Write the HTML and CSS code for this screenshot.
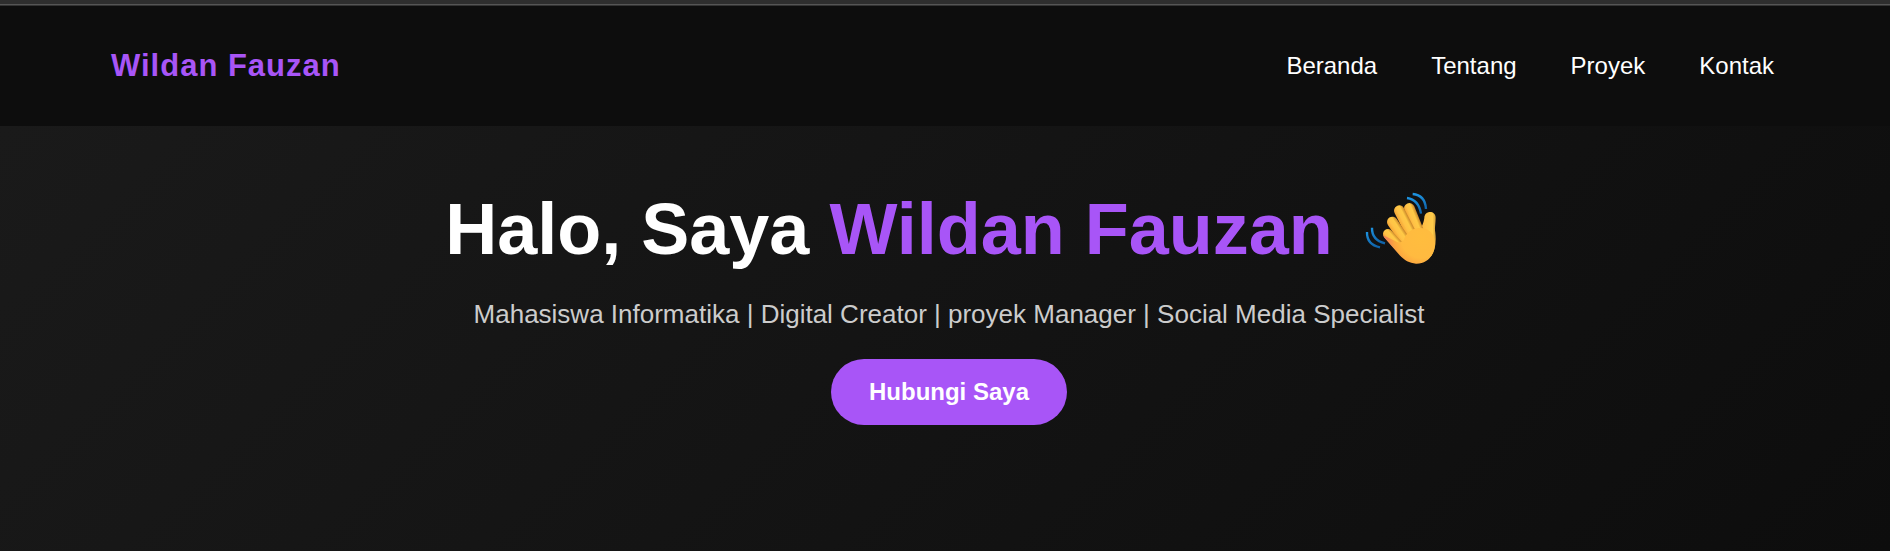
FILE: index.html
```html
<!DOCTYPE html>
<html lang="id">
<head>
<meta charset="utf-8">
<meta name="viewport" content="width=device-width, initial-scale=1">
<title>Wildan Fauzan</title>
<link rel="stylesheet" href="styles.css">
</head>
<body>
<div class="top-strip"></div>
<header class="header">
  <div class="logo">Wildan Fauzan</div>
  <nav class="nav">
    <a href="#beranda">Beranda</a>
    <a href="#tentang">Tentang</a>
    <a href="#proyek">Proyek</a>
    <a href="#kontak">Kontak</a>
  </nav>
</header>
<main class="hero" id="beranda">
  <h1 class="title">Halo, Saya <span class="accent">Wildan Fauzan</span> <svg class="wave" viewBox="6 36 300 216" role="img" aria-label="Tangan melambai">
    <defs>
      <radialGradient id="palm" gradientUnits="userSpaceOnUse" cx="212" cy="172" r="104">
        <stop offset="0" stop-color="#ffbd3e"/>
        <stop offset="0.6" stop-color="#ffba40"/>
        <stop offset="0.8" stop-color="#fca83f"/>
        <stop offset="1" stop-color="#f08453"/>
      </radialGradient>
      <linearGradient id="finger" gradientUnits="userSpaceOnUse" x1="-16" y1="0" x2="16" y2="0">
        <stop offset="0" stop-color="#f5a535"/>
        <stop offset="0.35" stop-color="#ffc247"/>
        <stop offset="0.7" stop-color="#ffca46"/>
        <stop offset="1" stop-color="#c9862a"/>
      </linearGradient>
      <linearGradient id="thumb" x1="0" x2="1">
        <stop offset="0" stop-color="#f3a83a"/>
        <stop offset="0.5" stop-color="#ffc045"/>
        <stop offset="0.85" stop-color="#ffcb49"/>
        <stop offset="1" stop-color="#d09c3a"/>
      </linearGradient>
      <linearGradient id="motion" x1="0" y1="0" x2="0" y2="1">
        <stop offset="0" stop-color="#1d93e0"/>
        <stop offset="1" stop-color="#0f62a8"/>
      </linearGradient>
    </defs>
    <g fill="none" stroke="url(#motion)" stroke-width="7">
      <path d="M168 54Q203 59 210 101"/>
      <path d="M185 42Q222 45 225 87"/>
      <path d="M63 143Q62 180 102 190"/>
      <path d="M48 156Q47 194 87 202"/>
    </g>
    <path d="M220 114C220 90 254 90 254 113C254 132 250 145 253 158C257 190 251 215 239 230L198 205L190 165C207 151 216 139 220 114Z" fill="url(#thumb)"/>
    <g fill="url(#finger)">
      <rect x="-16" y="-16" width="32" height="110" rx="16" transform="translate(175 85) rotate(-22)"/>
      <rect x="-16" y="-16" width="32" height="115" rx="16" transform="translate(145 92) rotate(-27)"/>
      <rect x="-16" y="-16" width="32" height="100" rx="16" transform="translate(124 126) rotate(-34)"/>
      <rect x="-15" y="-15" width="30" height="80" rx="15" transform="translate(111 162) rotate(-42)"/>
    </g>
    <path d="M97 166L99 172L146 226C160 241 175 250 195 251C228 252 252 226 252 190C251 162 235 143 203 144C181 146 164 160 158 181C152 187 145 189 138 186C122 178 108 172 97 166Z" fill="url(#palm)"/>
  </svg></h1>
  <p class="subtitle">Mahasiswa Informatika | Digital Creator | proyek Manager | Social Media Specialist</p>
  <a class="button" href="#kontak">Hubungi Saya</a>
</main>
</body>
</html>
```
FILE: styles.css
```css
* {
  box-sizing: border-box;
  margin: 0;
  padding: 0;
}

body {
  display: flex;
  flex-direction: column;
  min-height: 100vh;
  background: #0d0d0d;
  color: #fff;
  font-family: "Liberation Sans", Arial, sans-serif;
}

.top-strip {
  height: 6px;
  background: linear-gradient(#2e2e2e 4px, #555 4px, #555 5px, #333 5px);
}

.header {
  display: flex;
  flex-wrap: wrap;
  align-items: center;
  justify-content: space-between;
  gap: 24px;
  min-height: 120px;
  padding: 24px 116px 24px 111px;
  background: #0d0d0d;
}

.logo {
  color: #a855f7;
  font-size: 31px;
  font-weight: bold;
  letter-spacing: 1px;
}

.nav {
  display: flex;
  flex-wrap: wrap;
  gap: 54px;
}

.nav a {
  color: #fff;
  font-size: 24px;
  text-decoration: none;
}

.hero {
  flex: 1;
  display: flex;
  flex-direction: column;
  align-items: center;
  padding: 61px 24px 61px 32px;
  background: linear-gradient(135deg, #1a1a1a, #0d0d0d);
  text-align: center;
}

.title {
  margin-bottom: 28px;
  font-size: 72px;
  line-height: 84px;
}

.accent {
  color: #a855f7;
}

.wave {
  width: 100px;
  height: 72px;
  vertical-align: -10px;
}

.subtitle {
  margin-bottom: 30px;
  color: #ccc;
  font-size: 26px;
  line-height: 30px;
}

.button {
  padding: 19px 38px;
  border-radius: 33px;
  background: #a855f7;
  color: #fff;
  font-size: 24px;
  font-weight: bold;
  line-height: 28px;
  text-decoration: none;
}
```
